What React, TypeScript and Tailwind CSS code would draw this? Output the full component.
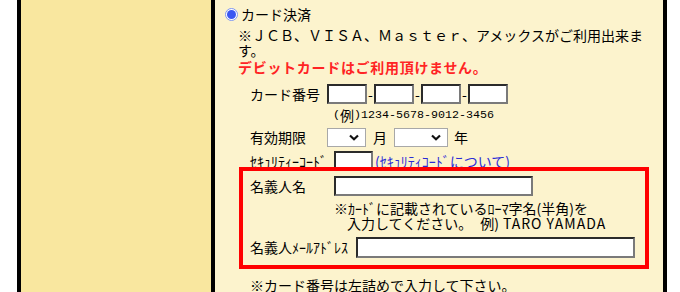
const jp = { fontFamily: '"Noto Sans CJK JP", sans-serif' };
const mono = { fontFamily: '"Liberation Mono", monospace' };

function TextBox({ w, h = 20 }: { w: number; h?: number }) {
	return (
		<div
			className="shrink-0 border-2 border-t-[#2b2b2b] border-l-[#2b2b2b] border-b-[#7a7a7a] border-r-[#7a7a7a] bg-white"
			style={{ width: w, height: h }}
		/>
	);
}

function Select({ w }: { w: number }) {
	return (
		<div
			className="flex h-[19px] shrink-0 items-center justify-end border border-[#a8a8a8] bg-white pr-[6px]"
			style={{ width: w }}
		>
			<svg width="10" height="7" viewBox="0 0 10 7">
				<path d="M1 1.5 L5 5.2 L9 1.5" fill="none" stroke="#111" strokeWidth="2.2" />
			</svg>
		</div>
	);
}

export default function App() {
	return (
		<div className="flex h-[292px] w-[680px] overflow-hidden bg-white text-[14px] leading-[15px] text-black" style={jp}>
			<div className="ml-[17px] flex w-[650px] border-x-4 border-black">
				<div className="w-[190px] shrink-0 bg-[#f9e79f]" />
				<div className="flex-1 border-l-4 border-black bg-[#fcf3cd] pr-[14px] pt-[7px]">
					{/* 支払方法 */}
					<div className="flex h-[15px] items-center">
						<span className="ml-[10px] flex h-[13px] w-[13px] items-center justify-center rounded-full border border-[#7f97f2] bg-white p-[1px]">
							<span className="h-full w-full rounded-full bg-[#3a58f2]" />
						</span>
						<span className="ml-[3px]">カード決済</span>
					</div>

					<div className="ml-[23px]">
						<div className="mt-[6px] whitespace-nowrap">
							<p>※ＪＣＢ、ＶＩＳＡ、Ｍａｓｔｅｒ、アメックスがご利用出来ま</p>
							<p>す。</p>
						</div>
						<p className="mt-[2px] whitespace-nowrap font-bold tracking-[0.7px] text-[#ff2424]">
							デビットカードはご利用頂けません。
						</p>

						<div className="ml-[12px] mt-[9px] flex h-[20px] items-center">
							<span className="w-[77px]">カード番号</span>
							<TextBox w={40} />
							<span className="w-[7px] text-center">-</span>
							<TextBox w={40} />
							<span className="w-[7px] text-center">-</span>
							<TextBox w={40} />
							<span className="w-[7px] text-center">-</span>
							<TextBox w={40} />
						</div>
						<div className="ml-[95px] mt-[4px] flex h-[15px] items-center">
							<span className="text-[11.67px]" style={mono}>(</span>
							<span>例</span>
							<span className="text-[11.67px]" style={mono}>
								)1234-5678-9012-3456
							</span>
						</div>

						<div className="ml-[12px] mt-[5px] flex h-[19px] items-center">
							<span className="w-[77px]">有効期限</span>
							<Select w={39} />
							<span className="ml-[7px]">月</span>
							<div className="ml-[7px]">
								<Select w={54} />
							</div>
							<span className="ml-[6px]">年</span>
						</div>

						<div className="ml-[12px] mt-[4px] flex h-[20px] items-center">
							<span className="w-[84px]">ｾｷｭﾘﾃｨｰｺｰﾄﾞ</span>
							<TextBox w={39} />
							<a className="ml-[2px] text-[#2b2bd6] underline" href="#">
								(ｾｷｭﾘﾃｨｺｰﾄﾞについて)
							</a>
						</div>

						{/* 名義人 */}
						<div className="relative -mt-[4px] ml-[1px] w-[410px] border-4 border-[#ff0000] pb-[7px] pl-[7px] pt-[5px]">
							<div className="flex h-[20px] items-center">
								<span className="w-[84px]">名義人名</span>
								<TextBox w={199} />
							</div>
							<div className="ml-[84px] mt-[5px] whitespace-nowrap">
								<p>※ｶｰﾄﾞに記載されているﾛｰﾏ字名(半角)を</p>
								<p>
									<span className="ml-[13px]">入力してください。</span>
									<span className="ml-[8px]">例)</span>
									<span className="ml-[4px] tracking-[1px]">TARO YAMADA</span>
								</p>
							</div>
							<div className="mt-[6px] flex h-[21px] items-center">
								<span className="w-[106px]">名義人ﾒｰﾙｱﾄﾞﾚｽ</span>
								<TextBox w={279} h={21} />
							</div>
						</div>

						<p className="ml-[12px] mt-[9px] whitespace-nowrap">※カード番号は左詰めで入力して下さい。</p>
					</div>
				</div>
			</div>
		</div>
	);
}
